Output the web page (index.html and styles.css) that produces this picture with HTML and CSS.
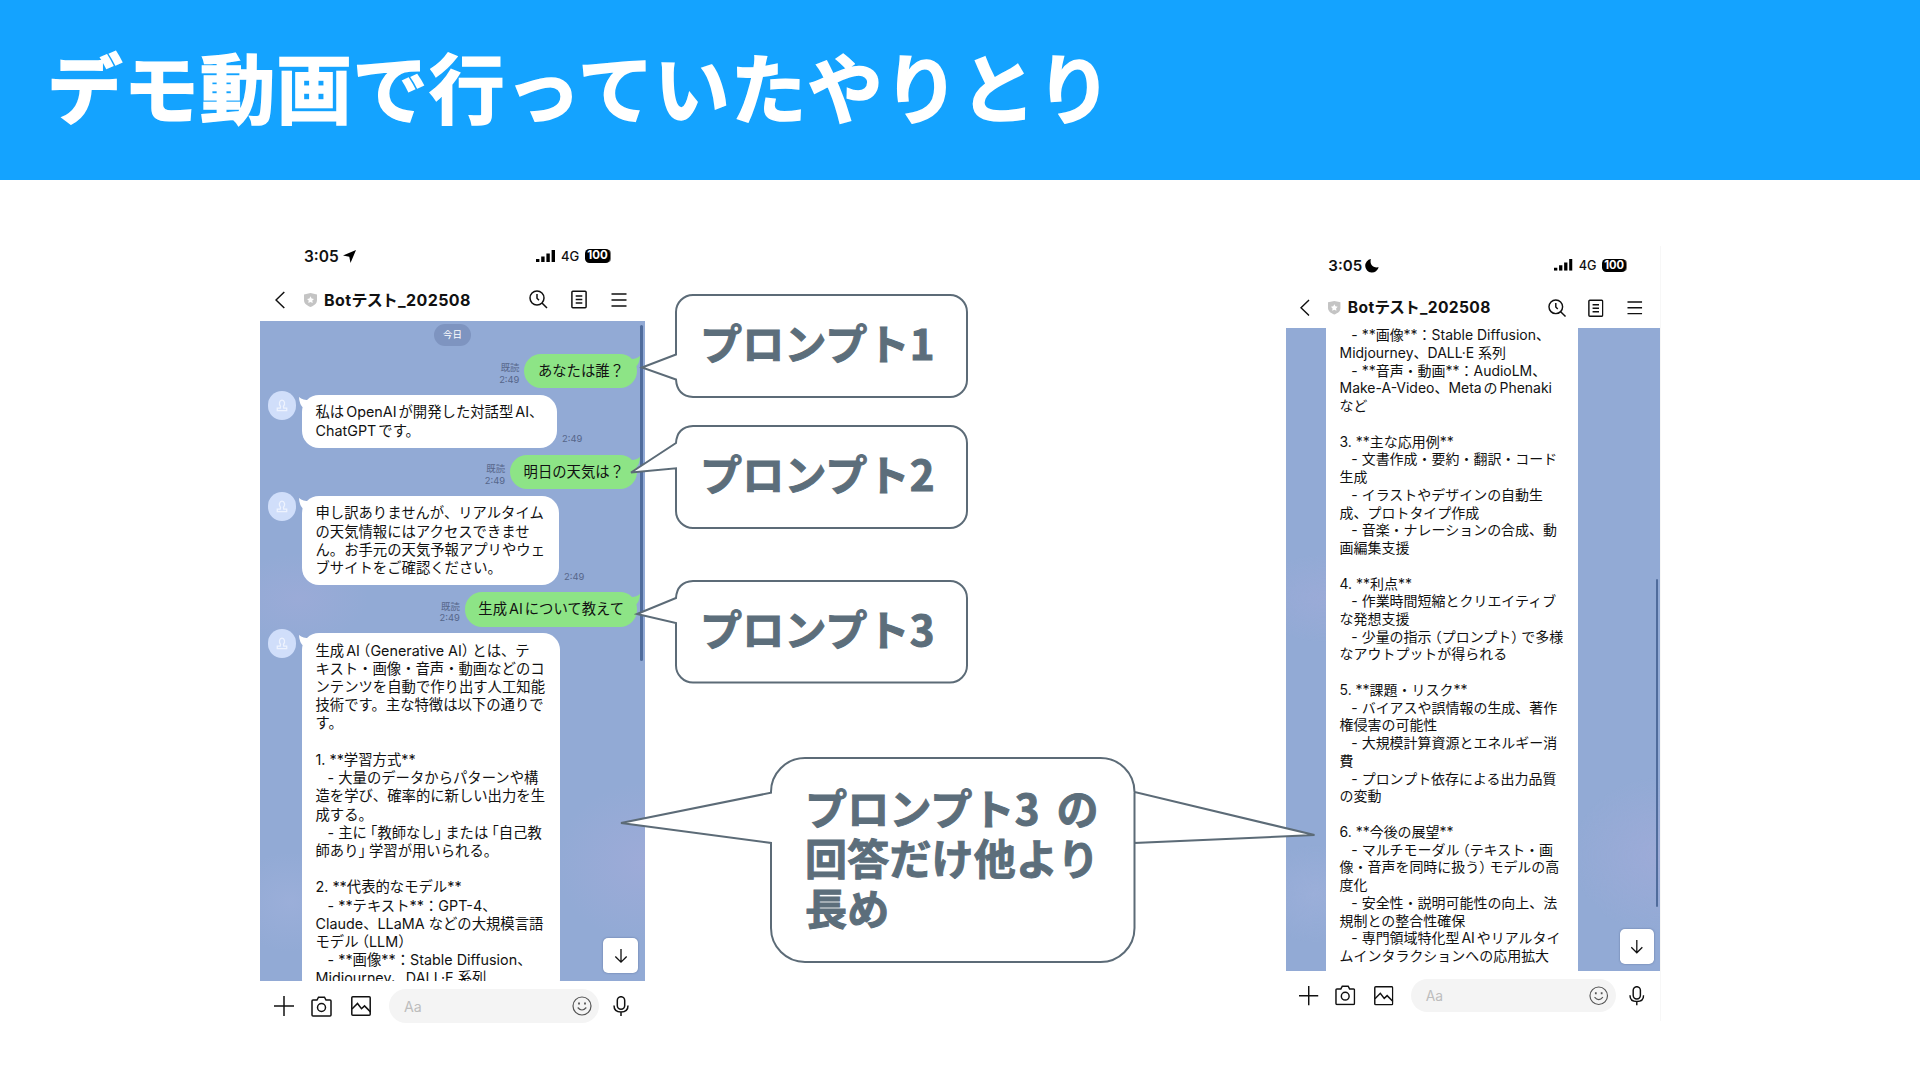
FILE: index.html
```html
<!DOCTYPE html>
<html lang="ja">
<head>
    <meta charset="UTF-8">
    <meta name="viewport" content="width=device-width, initial-scale=1.0">
    <title>デモ動画で行っていたやりとり</title>
    <link rel="stylesheet" href="styles.css">
</head>
<body>
    <!-- shared icons -->
    <svg class="sprite" width="0" height="0">
        <symbol id="back" viewBox="0 0 10 18"><path d="M9.3 1 1 9l8.3 8"/></symbol>
        <symbol id="shield" viewBox="0 0 13 14"><path d="M6.500 0 13 1.400V7c0 3.600-2.800 5.500-6.500 7C2.800 12.500 0 10.600 0 7V1.400z" fill="#c4c4c4" stroke="none"/><path d="m6.500 3.300 1.100 2.200 2.400.4-1.700 1.700.4 2.400-2.200-1.100L4.300 10l.4-2.400L3 5.900l2.400-.4z" fill="#fff" stroke="none"/></symbol>
        <symbol id="search" viewBox="0 0 19 19"><circle cx="8" cy="8" r="7"/><path d="m13 13 5 5M8 4v4.200l2 2"/></symbol>
        <symbol id="note" viewBox="0 0 16 19"><rect x=".9" y="1.200" width="14.200" height="16.600" rx="1"/><path d="M4.700 6h6.600M4.700 9.500h6.600M4.700 13h6.600"/></symbol>
        <symbol id="menu" viewBox="0 0 16 16"><path d="M.5 2h15M.5 8h15M.5 14h15"/></symbol>
        <symbol id="signal" viewBox="0 0 19 12"><path d="M0 9h3.400v3H0zM5.200 6.500h3.400V12H5.200zM10.400 3.500h3.400V12h-3.400zM15.600 0H19v12h-3.400z" fill="#000" stroke="none"/></symbol>
        <symbol id="plus" viewBox="0 0 20 20"><path d="M10 0v20M0 10h20"/></symbol>
        <symbol id="camera" viewBox="0 0 21 21"><path d="M2 4h4l1.500-2.800h6L15 4h4q1 0 1 1v14q0 1-1 1H2q-1 0-1-1V5q0-1 1-1z"/><circle cx="10.500" cy="11.500" r="4"/></symbol>
        <symbol id="picture" viewBox="0 0 20 20"><rect x=".8" y=".8" width="18.400" height="18.400" rx="1"/><path d="m1 13 5.500-5.500 4 5.200 3-2.800 6 6"/></symbol>
        <symbol id="smile" viewBox="0 0 20 20"><circle cx="10" cy="10" r="9"/><path d="M5.700 11.500q4.300 5 8.600 0"/><path d="M7 6.500v2M13 6.500v2" stroke-width="1.800"/></symbol>
        <symbol id="mic" viewBox="0 0 16 20"><rect x="4.300" y=".7" width="7.400" height="12.600" rx="3.700"/><path d="M1 9.500q0 6.500 7 6.500t7-6.500M8 16v4"/></symbol>
        <symbol id="down" viewBox="0 0 16 18"><path d="M8 1v15M1.500 9.500 8 16l6.500-6.500"/></symbol>
        <symbol id="person" viewBox="0 0 14 15"><path d="M5.300 8.300C3 6 3.900 1.300 7 1.300S11 6 8.700 8.300L9 10.500h3.500v3h-11v-3H5z"/></symbol>
        <symbol id="tail-right" viewBox="0 0 14 12"><path d="M0 3Q9 4 14 0q0 7-5 12z" fill="#8de486" stroke="none"/></symbol>
        <symbol id="tail-left" viewBox="0 0 14 12"><path d="M14 3Q5 4 0 0q0 7 5 12z" fill="#fff" stroke="none"/></symbol>
    </svg>

    <header class="title-bar">
        <h1>デモ動画で行っていたやりとり</h1>
    </header>

    <main class="stage">
        <section class="phone">
            <div class="status">
                <span class="clock">3:05</span>
                <svg class="location" viewBox="0 0 13 13"><path d="M13 0 7.500 13 6.300 6.700 0 5.500z"/></svg>
                <svg class="signal"><use href="#signal"/></svg>
                <span class="network">4G</span>
                <span class="battery">100</span>
            </div>
            <div class="nav">
                <svg class="back"><use href="#back"/></svg>
                <svg class="shield"><use href="#shield"/></svg>
                <h2>Bot<span class="kana">テスト</span>_202508</h2>
                <svg class="search"><use href="#search"/></svg>
                <svg class="note"><use href="#note"/></svg>
                <svg class="menu"><use href="#menu"/></svg>
            </div>
            <div class="chat">
                <span class="date">今日</span>
                <div class="message sent">
                    <span class="meta">既読<br>2:49</span>
                    <div class="bubble">あなたは誰？<svg class="tail"><use href="#tail-right"/></svg></div>
                </div>
                <div class="message">
                    <span class="avatar"><svg><use href="#person"/></svg></span>
                    <div class="bubble w1">私は<span class="latin">OpenAI</span>が開発した対話型<span class="latin start">AI</span>、
<span class="latin end">ChatGPT</span>です。<svg class="tail"><use href="#tail-left"/></svg></div>
                    <span class="meta">2:49</span>
                </div>
                <div class="message sent">
                    <span class="meta">既読<br>2:49</span>
                    <div class="bubble">明日の天気は？<svg class="tail"><use href="#tail-right"/></svg></div>
                </div>
                <div class="message">
                    <span class="avatar"><svg><use href="#person"/></svg></span>
                    <div class="bubble w2">申し訳ありませんが、リアルタイム
の天気情報にはアクセスできませ
ん。お手元の天気予報アプリやウェ
ブサイトをご確認ください。<svg class="tail"><use href="#tail-left"/></svg></div>
                    <span class="meta">2:49</span>
                </div>
                <div class="message sent">
                    <span class="meta">既読<br>2:49</span>
                    <div class="bubble">生成<span class="latin">AI</span>について教えて<svg class="tail"><use href="#tail-right"/></svg></div>
                </div>
                <div class="message">
                    <span class="avatar"><svg><use href="#person"/></svg></span>
                    <div class="bubble w3">生成<span class="latin start">AI</span><span class="open">（</span>Generative AI<span class="close">）</span>とは、テ
キスト・画像・音声・動画などのコ
ンテンツを自動で作り出す人工知能
技術です。主な特徴は以下の通りで
す。

1. **学習方式**
   - 大量のデータからパターンや構
造を学び、確率的に新しい出力を生
成する。
   - 主に<span class="open">「</span>教師なし<span class="close">」</span>または<span class="open">「</span>自己教
師あり<span class="close">」</span>学習が用いられる。

2. **代表的なモデル**
   - **テキスト**：GPT-4、
Claude、LLaMA などの大規模言語
モデル<span class="open">（</span>LLM<span class="close">）</span>
   - **画像**：Stable Diffusion、
Midjourney、DALL·E 系列<svg class="tail"><use href="#tail-left"/></svg></div>
                </div>
                <span class="scrollbar"></span>
                <button class="to-bottom"><svg><use href="#down"/></svg></button>
            </div>
            <div class="composer">
                <svg class="plus"><use href="#plus"/></svg>
                <svg class="camera"><use href="#camera"/></svg>
                <svg class="picture"><use href="#picture"/></svg>
                <div class="field"><span>Aa</span><svg><use href="#smile"/></svg></div>
                <svg class="mic"><use href="#mic"/></svg>
            </div>
        </section>

        <section class="phone second">
            <div class="status">
                <span class="clock">3:05</span>
                <svg class="location" viewBox="0 0 13 13"><path d="M5 0C3.500 5.500 7 9.500 13 8.500A7 7 0 1 1 5 0z"/></svg>
                <svg class="signal"><use href="#signal"/></svg>
                <span class="network">4G</span>
                <span class="battery">100</span>
            </div>
            <div class="nav">
                <svg class="back"><use href="#back"/></svg>
                <svg class="shield"><use href="#shield"/></svg>
                <h2>Bot<span class="kana">テスト</span>_202508</h2>
                <svg class="search"><use href="#search"/></svg>
                <svg class="note"><use href="#note"/></svg>
                <svg class="menu"><use href="#menu"/></svg>
            </div>
            <div class="chat">
                <div class="message continued">
                    <div class="bubble w3">   - **画像**：Stable Diffusion、
Midjourney、DALL·E 系列
   - **音声・動画**：AudioLM、
Make-A-Video、Meta<span class="latin">の</span>Phenaki
など

3. **主な応用例**
   - 文書作成・要約・翻訳・コード
生成
   - イラストやデザインの自動生
成、プロトタイプ作成
   - 音楽・ナレーションの合成、動
画編集支援

4. **利点**
   - 作業時間短縮とクリエイティブ
な発想支援
   - 少量の指示<span class="open">（</span>プロンプト<span class="close">）</span>で多様
なアウトプットが得られる

5. **課題・リスク**
   - バイアスや誤情報の生成、著作
権侵害の可能性
   - 大規模計算資源とエネルギー消
費
   - プロンプト依存による出力品質
の変動

6. **今後の展望**
   - マルチモーダル<span class="open">（</span>テキスト・画
像・音声を同時に扱う<span class="close">）</span>モデルの高
度化
   - 安全性・説明可能性の向上、法
規制との整合性確保
   - 専門領域特化型<span class="latin">AI</span>やリアルタイ
ムインタラクションへの応用拡大</div>
                </div>
                <span class="scrollbar"></span>
                <button class="to-bottom"><svg><use href="#down"/></svg></button>
            </div>
            <div class="composer">
                <svg class="plus"><use href="#plus"/></svg>
                <svg class="camera"><use href="#camera"/></svg>
                <svg class="picture"><use href="#picture"/></svg>
                <div class="field"><span>Aa</span><svg><use href="#smile"/></svg></div>
                <svg class="mic"><use href="#mic"/></svg>
            </div>
        </section>

        <!-- speech balloons laid over the screens -->
        <div class="callout first">
            <svg><path d="M18 1H275a17 17 0 0 1 17 17V86a17 17 0 0 1-17 17H18Q2 102 1 85.500L-33 73.500 1 60.500V18A17 17 0 0 1 18 1z"/></svg>
            <p>プロンプト1</p>
        </div>
        <div class="callout middle">
            <svg><path d="M18 1H275a17 17 0 0 1 17 17V86a17 17 0 0 1-17 17H18A17 17 0 0 1 1 86V43.300L-44 47.500 1 18Q2 2 18 1z"/></svg>
            <p>プロンプト2</p>
        </div>
        <div class="callout last">
            <svg><path d="M18 1H275a17 17 0 0 1 17 17V85.500a17 17 0 0 1-17 17H18A17 17 0 0 1 1 85.500V43L-38 34 1 18Q2 2 18 1z"/></svg>
            <p>プロンプト3</p>
        </div>
        <div class="callout summary">
            <svg><path d="M35 1H330a34 34 0 0 1 34.500 34L544.500 78 364.500 86V171a34 34 0 0 1-34.500 34H35A34 34 0 0 1 1 171V86L-149 66 1 35.700A34 34 0 0 1 35 1zM364.500 35V86"/></svg>
            <p>プロンプト3 の<br>回答だけ他より<br>長め</p>
        </div>
    </main>
</body>
</html>
```
FILE: styles.css
```css
* {
    box-sizing: border-box;
}
body {
    margin: 0;
    width: 1920px;
    height: 1081px;
    overflow: hidden;
    background: #fff;
    color: #111;
    font-family: 'Inter', 'Noto Sans CJK JP', sans-serif;
}
svg {
    display: block;
    flex: none;
    fill: none;
    stroke: #111;
    stroke-width: 1.5;
    overflow: visible;
}
.sprite {
    position: absolute;
}
.title-bar {
    display: flex;
    align-items: center;
    height: 180px;
    padding: 0 0 9px 47px;
    background: #14a3ff;
}
h1 {
    margin: 0;
    font-family: 'Noto Sans CJK JP', sans-serif;
    font-size: 75.6px;
    font-weight: 700;
    line-height: 1;
    letter-spacing: 0.8px;
    color: #fff;
    -webkit-text-stroke: 1.5px #fff;
}
.stage {
    position: relative;
    display: flex;
    align-items: flex-start;
    gap: 640.5px;
    height: 901px;
    padding: 56px 0 0 260px;
}

/* phone screens */
.phone {
    width: 385px;
    flex: none;
}
.phone.second {
    zoom: 0.974;
    margin-top: 10px;
    box-shadow: 1px 0 #f7f7f7;
}
.status {
    display: flex;
    align-items: center;
    height: 40px;
    padding-left: 44px;
}
.clock {
    width: 39px;
    font-size: 15.5px;
    font-weight: 600;
}
.location {
    width: 13px;
    height: 13px;
    fill: #000;
    stroke: none;
}
.signal {
    width: 19px;
    height: 12px;
    margin-left: 180px;
}
.network {
    width: 24px;
    margin-left: 6px;
    font-size: 13px;
    font-weight: 500;
}
.battery {
    width: 25px;
    height: 13.5px;
    border-radius: 4.5px;
    background: #000;
    color: #fff;
    font-size: 11.5px;
    font-weight: 700;
    line-height: 13.5px;
    text-align: center;
    box-shadow: 1.5px 0 0 -0.5px #777;
}
.nav {
    display: flex;
    align-items: center;
    height: 44.5px;
    padding: 3px 18px 0 15px;
}
.back {
    width: 10px;
    height: 18px;
}
.shield {
    width: 13px;
    height: 14px;
    margin: 0 7px 0 19px;
}
h2 {
    margin: 0;
    flex: 1;
    font-size: 16px;
    font-weight: 700;
    line-height: 24px;
    letter-spacing: 0.4px;
    white-space: nowrap;
}
.kana {
    margin: 0 1px 0 0;
    letter-spacing: -0.8px;
}
.search {
    width: 19px;
    height: 19px;
}
.note {
    width: 16px;
    height: 19px;
    margin: 0 24px 0 23px;
}
.menu {
    width: 16px;
    height: 16px;
}
.chat {
    position: relative;
    display: flex;
    flex-direction: column;
    gap: 6.8px;
    height: 660px;
    padding-top: 3px;
    overflow: hidden;
    background:
        radial-gradient(ellipse 70px 45px at 10% 42%, rgba(174, 172, 220, 0.3), transparent),
        radial-gradient(ellipse 90px 80px at 100% 82%, rgba(174, 172, 220, 0.4), transparent),
        radial-gradient(ellipse 60px 50px at 8% 88%, rgba(166, 180, 222, 0.45), transparent),
        #92aad5;
}
.second .chat {
    padding-top: 0;
}
.date {
    align-self: center;
    width: 37px;
    height: 23px;
    margin-bottom: 1.5px;
    border-radius: 12px;
    background: #7e94c0;
    color: #fff;
    font-size: 9.5px;
    line-height: 22px;
    text-align: center;
}
.message {
    display: flex;
    align-items: flex-end;
    padding-left: 7.5px;
}
.message.sent {
    justify-content: flex-end;
    padding: 0 8px 0 0;
}
.message.continued {
    margin-top: -10px;
    padding-left: 42px;
}
.avatar {
    display: flex;
    align-self: flex-start;
    align-items: center;
    justify-content: center;
    width: 28.5px;
    height: 28.5px;
    margin: -4px 6px -20px 0;
    border-radius: 50%;
    background: #d0defa;
}
.avatar svg {
    width: 12px;
    height: 13px;
    stroke: #eef3fe;
}
.bubble {
    position: relative;
    padding: 8.2px 0 8.2px 13.5px;
    border-radius: 17px;
    background: #fff;
    font-size: 14.35px;
    line-height: 18.2px;
    white-space: pre;
}
.sent .bubble {
    padding-right: 13px;
    background: #8de486;
}
.tail {
    position: absolute;
    top: 2px;
    left: -3px;
    width: 14px;
    height: 12px;
}
.sent .tail {
    left: auto;
    right: -3px;
}
.w1 {
    width: 255px;
}
.w2 {
    width: 257px;
}
.w3 {
    width: 258px;
}
.continued .bubble {
    border-radius: 0;
    padding-bottom: 30px;
}
/* small gap where latin and kana meet */
.latin {
    margin: 0 2px;
}
.latin.start {
    margin-right: 0;
}
.latin.end {
    margin-left: 0;
}
.open,
.close {
    font-feature-settings: 'halt';
}
.open {
    margin-left: 3.3px;
}
.close {
    margin-right: 3.3px;
}
.meta {
    margin: 0 5px 3px;
    color: #56668a;
    font-size: 9.4px;
    line-height: 11.5px;
    text-align: right;
}
.scrollbar {
    position: absolute;
    top: 4px;
    right: 2.5px;
    width: 2.5px;
    height: 336px;
    border-radius: 2px;
    background: #506c9c;
}
.second .scrollbar {
    top: 258px;
}
.to-bottom {
    position: absolute;
    right: 7px;
    bottom: 7.5px;
    display: flex;
    align-items: center;
    justify-content: center;
    width: 35px;
    height: 35px;
    padding: 0;
    border: 0;
    border-radius: 5px;
    background: #fff;
    box-shadow: 0 0 2px rgba(40, 60, 100, 0.5);
}
.to-bottom svg {
    width: 14px;
    height: 16px;
}
.composer {
    display: flex;
    align-items: center;
    height: 51px;
    padding-left: 14px;
}
.plus {
    width: 20px;
    height: 20px;
}
.camera {
    width: 21px;
    height: 21px;
    margin: 0 19px 0 16.5px;
}
.picture {
    width: 20px;
    height: 20px;
}
.field {
    display: flex;
    align-items: center;
    justify-content: space-between;
    width: 210px;
    height: 34px;
    margin: 0 13.5px 0 18.5px;
    padding: 0 7px 0 15px;
    border-radius: 17px;
    background: #f4f4f4;
    color: #bdbdbd;
    font-size: 14.2px;
}
.field svg {
    width: 20px;
    height: 20px;
    stroke: #555;
    stroke-width: 1.2;
}
.mic {
    width: 16px;
    height: 20px;
}

/* balloons */
.callout {
    position: absolute;
    left: 675px;
    display: flex;
    align-items: center;
    width: 293px;
    height: 103px;
    padding: 0 0 7px 25px;
}
.callout svg {
    position: absolute;
    top: 0;
    left: 0;
    width: 100%;
    height: 100%;
    fill: #fff;
    stroke: #5c6b77;
    stroke-width: 2;
}
.callout p {
    position: relative;
    margin: 0;
    color: #5c6e7b;
    font-family: 'Noto Sans CJK JP', sans-serif;
    font-size: 42px;
    font-weight: 700;
    line-height: 50px;
    letter-spacing: 0.2px;
    white-space: nowrap;
    -webkit-text-stroke: 1px #5c6e7b;
}
.first {
    top: 113.5px;
}
.middle {
    top: 245px;
}
.last {
    top: 400px;
}
.summary {
    top: 576.5px;
    left: 770px;
    width: 366px;
    height: 206px;
    padding: 0 0 5px 35px;
}
.callout.summary p {
    word-spacing: 7px;
}
```
